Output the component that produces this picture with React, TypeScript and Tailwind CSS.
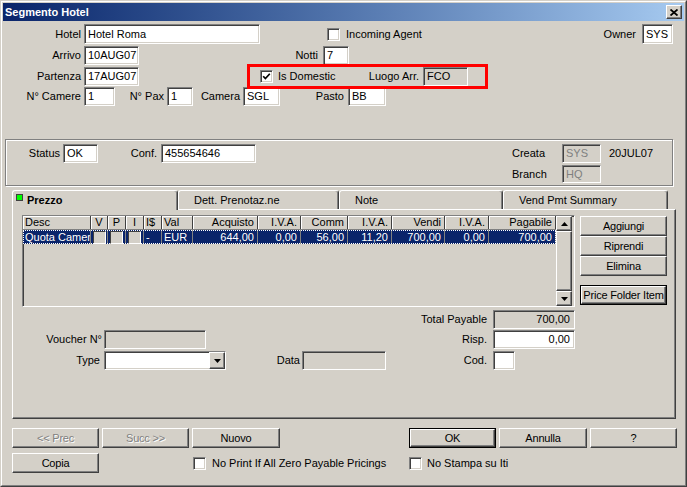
import React from 'react';

const sunken =
  'border border-t-[#808080] border-l-[#808080] border-b-white border-r-white shadow-[inset_1px_1px_0_#404040,inset_-1px_-1px_0_#d4d0c8]';
const raised =
  'border border-t-white border-l-white border-b-[#404040] border-r-[#404040] shadow-[inset_-1px_-1px_0_#808080]';

type FieldProps = {
  className: string;
  value?: string;
  disabled?: boolean;
  dim?: boolean;
  right?: boolean;
};

const Field = ({ className, value = '', disabled, dim, right }: FieldProps) => (
  <div
    className={`${sunken} ${disabled ? 'bg-[#d4d0c8]' : 'bg-white'} ${
      dim ? 'text-[#808080]' : 'text-black'
    } ${right ? 'justify-end pr-[4px]' : 'pl-[3px]'} flex items-center shrink-0 whitespace-nowrap overflow-hidden ${className}`}
  >
    {value}
  </div>
);

const Check = ({ checked }: { checked?: boolean }) => (
  <div className={`w-[13px] h-[13px] bg-white shrink-0 flex items-center justify-center ${sunken}`}>
    {checked && (
      <svg width="9" height="9" viewBox="0 0 9 9">
        <path d="M1.2 4.2 L3.4 6.6 L7.8 1.8" stroke="#000" strokeWidth="1.7" fill="none" />
      </svg>
    )}
  </div>
);

type BtnProps = { label: string; className: string; disabled?: boolean; def?: boolean };

const Btn = ({ label, className, disabled, def }: BtnProps) => (
  <div className={`flex shrink-0 bg-[#d4d0c8] ${def ? 'border border-black' : ''} ${className}`}>
    <div
      className={`flex-1 flex items-center justify-center whitespace-nowrap overflow-hidden tracking-[-0.2px] ${raised} ${
        disabled ? 'text-[#808080] [text-shadow:1px_1px_0_#fff]' : ''
      }`}
    >
      {label}
    </div>
  </div>
);

const Arrow = ({ down }: { down?: boolean }) => (
  <svg width="7" height="4" viewBox="0 0 7 4">
    <path d={down ? 'M0 0 H7 L3.5 4 Z' : 'M0 4 H7 L3.5 0 Z'} fill="#000" />
  </svg>
);

const cols = [
  { h: 'Desc', w: 'w-[68px]', a: 'justify-start pl-[2px]', v: 'Quota Camer' },
  { h: 'V', w: 'w-[17px]', a: 'justify-center', box: true },
  { h: 'P', w: 'w-[18px]', a: 'justify-center', box: true },
  { h: 'I', w: 'w-[18px]', a: 'justify-center', box: true },
  { h: 'I$', w: 'w-[18px]', a: 'justify-start pl-[2px]', v: '-' },
  { h: 'Val', w: 'w-[31px]', a: 'justify-start pl-[2px]', v: 'EUR' },
  { h: 'Acquisto', w: 'w-[65px]', a: 'justify-end pr-[3px]', v: '644,00' },
  { h: 'I.V.A.', w: 'w-[43px]', a: 'justify-end pr-[3px]', v: '0,00' },
  { h: 'Comm', w: 'w-[47px]', a: 'justify-end pr-[3px]', v: '56,00' },
  { h: 'I.V.A.', w: 'w-[44px]', a: 'justify-end pr-[3px]', v: '11,20' },
  { h: 'Vendi', w: 'w-[53px]', a: 'justify-end pr-[3px]', v: '700,00' },
  { h: 'I.V.A.', w: 'w-[44px]', a: 'justify-end pr-[3px]', v: '0,00' },
  { h: 'Pagabile', w: 'w-[67px]', a: 'justify-end pr-[3px]', v: '700,00' },
];

const PriceTable = () => (
  <div className={`w-[553px] h-[92px] bg-[#d4d0c8] flex shrink-0 ${sunken}`}>
    <div className="w-[533px] flex flex-col">
      <div className="flex h-[14px] border-b border-b-[#808080]">
        {cols.map((c, i) => (
          <div
            key={i}
            className={`${c.w} ${c.a} flex items-center shrink-0 whitespace-nowrap overflow-hidden border-r border-r-[#404040] shadow-[inset_1px_1px_0_#fff]`}
          >
            {c.h}
          </div>
        ))}
      </div>
      <div className="flex h-[14px] bg-[#0a246a] text-white outline-1 outline-dotted outline-white -outline-offset-1">
        {cols.map((c, i) => (
          <div
            key={i}
            className={`${c.w} ${c.a} flex items-center shrink-0 whitespace-nowrap overflow-hidden border-r border-r-[#808080]`}
          >
            {c.box ? (
              <div className="w-[13px] h-[13px] bg-[#d4d0c8] border border-t-[#404040] border-l-[#404040] border-b-white border-r-white" />
            ) : (
              c.v
            )}
          </div>
        ))}
      </div>
    </div>
    <div className="w-[16px] flex flex-col">
      <div className={`h-[15px] bg-[#d4d0c8] flex items-center justify-center ${raised}`}>
        <Arrow />
      </div>
      <div className={`flex-1 bg-[#d4d0c8] ${raised}`} />
      <div className={`h-[15px] bg-[#d4d0c8] flex items-center justify-center ${raised}`}>
        <Arrow down />
      </div>
    </div>
  </div>
);

const tabBase =
  'flex items-center shrink-0 bg-[#d4d0c8] border-t border-l border-r border-t-white border-l-white border-r-[#404040] shadow-[inset_-1px_0_0_#808080] rounded-t-[3px] whitespace-nowrap';

export default function App() {
  return (
    <div className="relative w-[687px] h-[487px] bg-[#d4d0c8] border border-t-[#d4d0c8] border-l-[#d4d0c8] border-b-[#404040] border-r-[#404040] font-['Liberation_Sans',Arial,sans-serif] text-[11px] text-black leading-none">
      <div className="h-full border border-t-white border-l-white border-b-[#808080] border-r-[#808080] p-px flex flex-col">
        {/* title bar */}
        <div className="h-[18px] shrink-0 flex items-center bg-gradient-to-r from-[#0a246a] to-[#a6caf0]">
          <span className="pl-[2px] text-white font-bold text-[11px]">Segmento Hotel</span>
          <div className={`ml-auto mr-[2px] w-[16px] h-[14px] bg-[#d4d0c8] flex items-center justify-center ${raised}`}>
            <svg width="8" height="7" viewBox="0 0 8 7">
              <path d="M0.5 0.5 L7.5 6.5 M7.5 0.5 L0.5 6.5" stroke="#000" strokeWidth="1.8" />
            </svg>
          </div>
        </div>

        {/* row 1 */}
        <div className="mt-[3px] h-[20px] flex items-center">
          <span className="w-[78px] text-right shrink-0">Hotel</span>
          <Field className="ml-[3px] w-[176px] h-[20px]" value="Hotel Roma" />
          <div className="ml-[67px]">
            <Check />
          </div>
          <span className="ml-[6px]">Incoming Agent</span>
          <span className="ml-auto">Owner</span>
          <Field className="ml-[6px] mr-[11px] w-[31px] h-[20px]" value="SYS" />
        </div>

        {/* row 2 */}
        <div className="mt-[2px] h-[19px] flex items-center">
          <span className="w-[78px] text-right shrink-0">Arrivo</span>
          <Field className="ml-[3px] w-[55px] h-[19px]" value="10AUG07" />
          <span className="w-[179px] text-right shrink-0">Notti</span>
          <Field className="ml-[5px] w-[26px] h-[19px]" value="7" />
        </div>

        {/* row 3 */}
        <div className="mt-[2px] h-[19px] flex items-center">
          <span className="w-[78px] text-right shrink-0">Partenza</span>
          <Field className="ml-[3px] w-[55px] h-[19px]" value="17AUG07" />
          <div className="ml-[121px]">
            <Check checked />
          </div>
          <span className="ml-[5px] w-[70px] shrink-0">Is Domestic</span>
          <span className="w-[71px] text-right shrink-0">Luogo Arr.</span>
          <Field className="ml-[4px] w-[45px] h-[19px]" value="FCO" disabled />
        </div>

        {/* row 4 */}
        <div className="mt-[1px] h-[19px] flex items-center">
          <span className="w-[78px] text-right shrink-0">N° Camere</span>
          <Field className="ml-[3px] w-[31px] h-[19px]" value="1" />
          <span className="w-[49px] text-right shrink-0">N° Pax</span>
          <Field className="ml-[3px] w-[26px] h-[19px]" value="1" />
          <span className="w-[47px] text-right shrink-0">Camera</span>
          <Field className="ml-[3px] w-[37px] h-[19px]" value="SGL" />
          <span className="w-[64px] text-right shrink-0">Pasto</span>
          <Field className="ml-[4px] w-[38px] h-[19px]" value="BB" />
        </div>

        {/* status group */}
        <div className="mt-[33px] ml-[2px] w-[668px] h-[47px] shrink-0 flex flex-col border border-[#808080] shadow-[inset_1px_1px_0_#fff,1px_1px_0_#fff]">
          <div className="mt-[4px] h-[19px] flex items-center">
            <span className="w-[54px] text-right shrink-0">Status</span>
            <Field className="ml-[3px] w-[35px] h-[19px]" value="OK" />
            <span className="w-[59px] text-right shrink-0">Conf.</span>
            <Field className="ml-[4px] w-[95px] h-[19px]" value="455654646" />
            <span className="ml-[256px] w-[50px] shrink-0">Creata</span>
            <Field className="w-[39px] h-[19px]" value="SYS" disabled dim />
            <span className="ml-[8px]">20JUL07</span>
          </div>
          <div className="mt-[2px] h-[18px] flex items-center">
            <span className="ml-[506px] w-[50px] shrink-0">Branch</span>
            <Field className="w-[39px] h-[18px]" value="HQ" disabled dim />
          </div>
        </div>

        {/* tabs */}
        <div className="mt-[4px] ml-[9px] h-[19px] flex items-end shrink-0">
          <div className={`${tabBase} relative z-10 w-[166px] h-[20px] -mb-px items-start`}>
            <div className="mt-[3px] ml-[3px] w-[7px] h-[7px] bg-[#00ff00] border border-[#404040]" />
            <span className="ml-[4px] self-center font-bold">Prezzo</span>
          </div>
          <div className={`${tabBase} w-[161px] h-[19px] pl-[15px]`}>Dett. Prenotaz.ne</div>
          <div className={`${tabBase} w-[164px] h-[19px] pl-[15px]`}>Note</div>
          <div className={`${tabBase} w-[165px] h-[19px] pl-[15px]`}>Vend Pmt Summary</div>
        </div>

        {/* tab panel */}
        <div className={`ml-[9px] w-[664px] h-[210px] shrink-0 flex flex-col ${raised}`}>
          <div className="mt-[5px] ml-[9px] flex items-start">
            <PriceTable />
            <div className="ml-[5px] mt-[1px] flex flex-col">
              <Btn label="Aggiungi" className="w-[87px] h-[20px]" />
              <Btn label="Riprendi" className="w-[87px] h-[20px]" />
              <Btn label="Elimina" className="w-[87px] h-[20px]" />
              <Btn label="Price Folder Item" className="mt-[9px] w-[87px] h-[20px]" def />
            </div>
          </div>

          <div className="mt-[3px] h-[19px] flex items-center">
            <span className="w-[474px] text-right shrink-0">Total Payable</span>
            <Field className="ml-[6px] w-[82px] h-[19px]" value="700,00" disabled right />
          </div>
          <div className="mt-[1px] h-[19px] flex items-center">
            <span className="w-[89px] text-right shrink-0">Voucher N°</span>
            <Field className="ml-[2px] w-[102px] h-[19px]" disabled />
            <span className="w-[281px] text-right shrink-0">Risp.</span>
            <Field className="ml-[6px] w-[82px] h-[19px]" value="0,00" right />
          </div>
          <div className="mt-[2px] h-[19px] flex items-center">
            <span className="w-[87px] text-right shrink-0">Type</span>
            <div className={`ml-[4px] w-[122px] h-[19px] bg-white flex justify-end shrink-0 ${sunken}`}>
              <div className={`w-[16px] bg-[#d4d0c8] flex items-center justify-center ${raised}`}>
                <Arrow down />
              </div>
            </div>
            <span className="w-[74px] text-right shrink-0">Data</span>
            <Field className="ml-[2px] w-[84px] h-[19px]" disabled />
            <span className="w-[101px] text-right shrink-0">Cod.</span>
            <Field className="ml-[6px] w-[22px] h-[19px]" />
          </div>
        </div>

        {/* bottom buttons */}
        <div className="mt-[9px] ml-[9px] h-[20px] flex gap-[3px]">
          <Btn label="<< Prec" className="w-[87px] h-[20px]" disabled />
          <Btn label="Succ >>" className="w-[87px] h-[20px]" disabled />
          <Btn label="Nuovo" className="w-[88px] h-[20px]" />
          <Btn label="OK" className="ml-[126px] w-[87px] h-[20px]" def />
          <Btn label="Annulla" className="w-[88px] h-[20px]" />
          <Btn label="?" className="w-[87px] h-[20px]" />
        </div>
        <div className="mt-[5px] ml-[9px] h-[20px] flex items-center">
          <Btn label="Copia" className="w-[87px] h-[20px]" />
          <div className="ml-[94px] w-[216px] flex items-center shrink-0">
            <Check />
            <span className="ml-[6px] whitespace-nowrap">No Print If All Zero Payable Pricings</span>
          </div>
          <Check />
          <span className="ml-[5px]">No Stampa su Iti</span>
        </div>
      </div>

      {/* highlight annotation */}
      <div className="absolute left-[246px] top-[63px] w-[241px] h-[25px] border-[3px] border-[#ff0000] pointer-events-none" />
    </div>
  );
}
